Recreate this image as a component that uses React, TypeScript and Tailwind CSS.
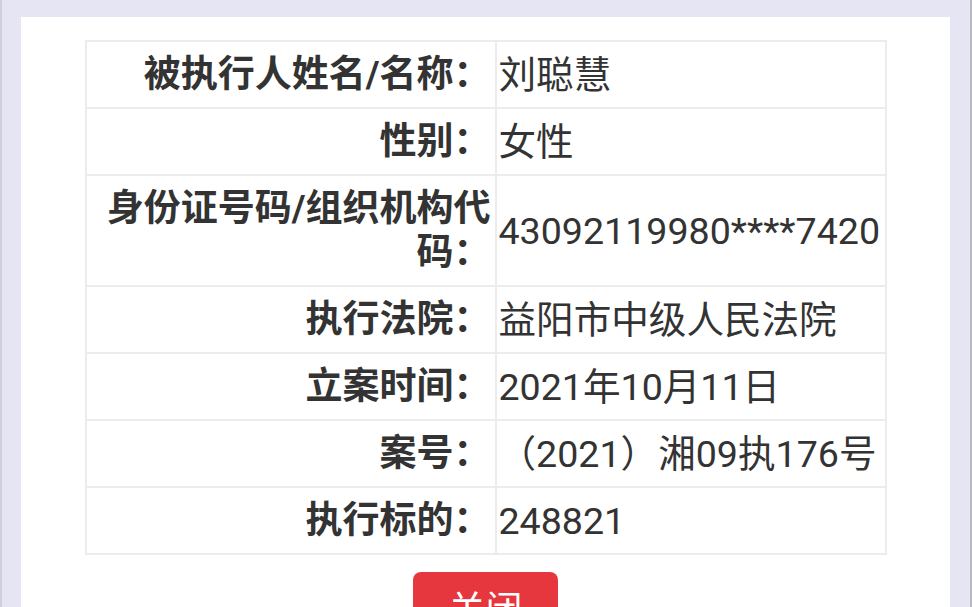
const rows: { label: string; value: string }[] = [
  { label: '被执行人姓名/名称：', value: '刘聪慧' },
  { label: '性别：', value: '女性' },
  { label: '身份证号码/组织机构代码：', value: '43092119980****7420' },
  { label: '执行法院：', value: '益阳市中级人民法院' },
  { label: '立案时间：', value: '2021年10月11日' },
  { label: '案号：', value: '（2021）湘09执176号' },
  { label: '执行标的：', value: '248821' },
];

export default function App() {
  return (
    <div
      className="h-[607px] w-[972px] overflow-hidden bg-[#e5e5f4] border-l-2 border-l-[#cfd0de] border-r-2 border-r-[#b9b9c4] text-[#333]"
      style={{ fontFamily: 'Roboto, "Noto Sans CJK SC", sans-serif' }}
    >
      <div className="ml-[19px] mt-[17px] w-[929px] h-[700px] bg-white pt-[23px] flex flex-col items-center">
        <table className="w-[802px] table-fixed border-collapse border-2 border-[#ececec] text-[37px] leading-[44px]">
          <colgroup>
            <col className="w-[410px]" />
            <col />
          </colgroup>
          <tbody>
            {rows.map((r) => (
              <tr key={r.label}>
                <td className="border-2 border-[#ececec] py-[10.5px] pl-[8px] pr-[4px] text-right font-bold align-middle">
                  {r.label}
                </td>
                <td className="border-2 border-[#ececec] py-[10.5px] pl-[2px] pr-0 whitespace-nowrap align-middle text-[37.6px]">
                  {r.value}
                </td>
              </tr>
            ))}
          </tbody>
        </table>
        <button
          type="button"
          className="mt-[17px] w-[145px] rounded-[8px] bg-[#e5373d] pt-[17px] pb-[14px] text-[37px] leading-[44px] text-white"
        >
          关闭
        </button>
      </div>
    </div>
  );
}
